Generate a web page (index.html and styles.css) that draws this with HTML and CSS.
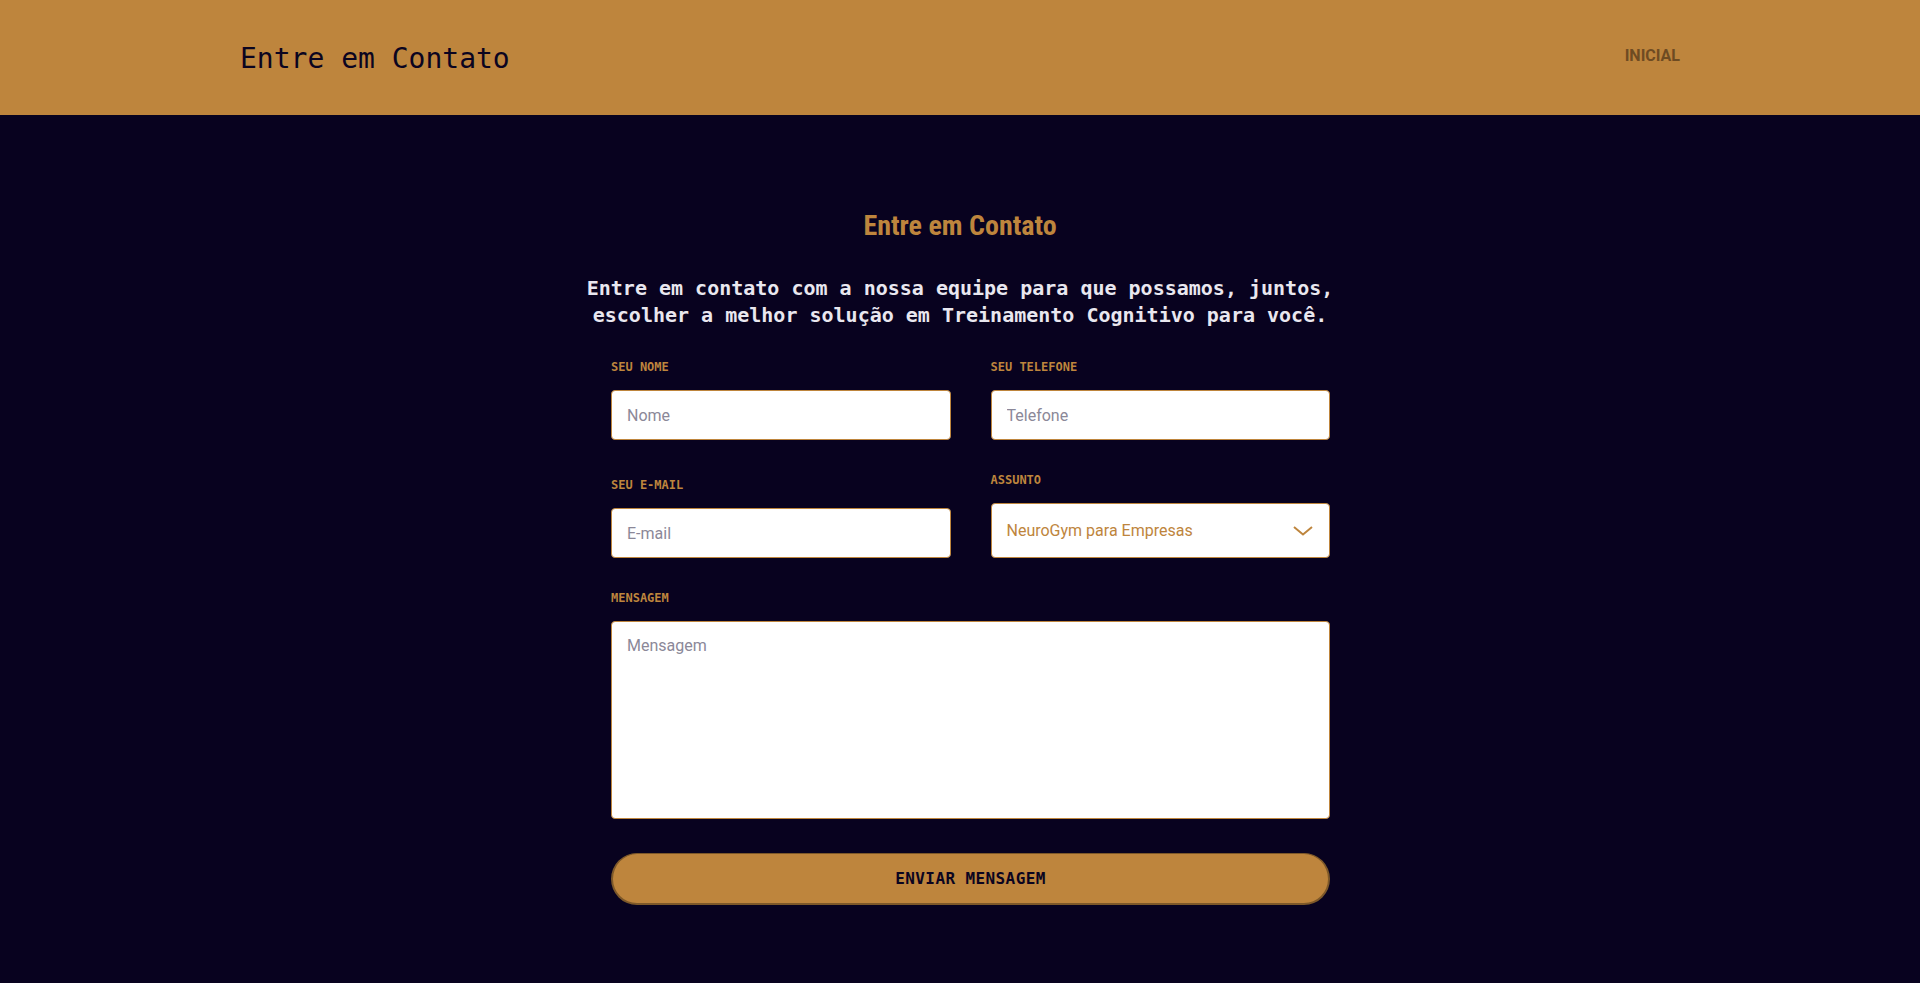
FILE: index.html
```html
<!DOCTYPE html>
<html lang="pt-BR">
<head>
<meta charset="utf-8">
<title>Entre em Contato</title>
<link rel="stylesheet" href="styles.css">
</head>
<body>
<header class="topbar">
  <div class="topbar-inner">
    <h1 class="brand">Entre em Contato</h1>
    <nav class="nav"><a class="nav-link" href="#">INICIAL</a></nav>
  </div>
</header>
<main class="main">
  <h2 class="title">Entre em Contato</h2>
  <p class="lead">Entre em contato com a nossa equipe para que possamos, juntos, escolher a melhor solução em Treinamento Cognitivo para você.</p>
  <form class="form">
    <div class="field">
      <label class="label">SEU NOME</label>
      <input class="control" type="text" placeholder="Nome">
    </div>
    <div class="field">
      <label class="label">SEU TELEFONE</label>
      <input class="control" type="text" placeholder="Telefone">
    </div>
    <div class="field">
      <label class="label">SEU E-MAIL</label>
      <input class="control" type="text" placeholder="E-mail">
    </div>
    <div class="field">
      <label class="label">ASSUNTO</label>
      <div class="select-wrap">
        <select class="control select">
          <option>NeuroGym para Empresas</option>
        </select>
        <svg class="chevron" width="20" height="10" viewBox="0 0 20 10"><path d="M1 1 L10 8.5 L19 1" fill="none" stroke="#be853d" stroke-width="2"/></svg>
      </div>
    </div>
    <div class="field full">
      <label class="label">MENSAGEM</label>
      <textarea class="control area" placeholder="Mensagem"></textarea>
    </div>
    <div class="field full">
      <button class="submit" type="button">ENVIAR MENSAGEM</button>
    </div>
  </form>
</main>
</body>
</html>
```
FILE: styles.css
```css
* { box-sizing: border-box; }
html, body { margin: 0; padding: 0; }
body {
  background: #08021f;
  font-family: Roboto, "Noto Sans", sans-serif;
  min-height: 983px;
}
.topbar {
  background: #be853d;
  height: 115px;
}
.topbar-inner {
  width: 1440px;
  height: 100%;
  margin: 0 auto;
  display: flex;
  align-items: center;
  justify-content: space-between;
}
.brand {
  margin: 0;
  font-family: "DejaVu Sans Mono", "Liberation Mono", monospace;
  font-weight: 400;
  font-size: 28px;
  color: #0b0420;
  padding-top: 2px;
}
.nav-link {
  font-family: Roboto, sans-serif;
  font-weight: 700;
  font-size: 16px;
  color: #6e4b22;
  text-decoration: none;
  display: block;
  margin-top: -4px;
}
.main {
  padding-top: 95px;
  padding-bottom: 78px;
}
.title {
  margin: 0;
  text-align: center;
  font-family: "Roboto Condensed", Roboto, sans-serif;
  font-stretch: condensed;
  font-weight: 700;
  font-size: 28px;
  line-height: 31px;
  color: #be853d;
}
.lead {
  width: 760px;
  margin: 34px auto 0;
  text-align: center;
  font-family: "DejaVu Sans Mono", "Liberation Mono", monospace;
  font-weight: 700;
  font-size: 20px;
  line-height: 27px;
  color: #e9e7ef;
}
.form {
  width: 719px;
  margin: 30px 0 0 calc(50% - 349px);
  display: grid;
  grid-template-columns: 1fr 1fr;
  column-gap: 40px;
  row-gap: 32px;
  align-items: end;
}
.field { display: flex; flex-direction: column; }
.full { grid-column: 1 / 3; }
.label {
  font-family: "DejaVu Sans Mono", "Liberation Mono", monospace;
  font-weight: 700;
  font-size: 12px;
  line-height: 16px;
  color: #be853d;
  margin-bottom: 15px;
}
.control {
  display: block;
  width: 100%;
  height: 50px;
  background: #fff;
  border: 1px solid #be853d;
  border-radius: 4px;
  padding: 0 15px;
  font-family: Roboto, sans-serif;
  font-size: 16px;
  color: #333;
  outline: none;
}
.control::placeholder { color: #8b8898; }
.select-wrap { position: relative; }
.select {
  height: 55px;
  appearance: none;
  -webkit-appearance: none;
  color: #be853d;
}
.chevron {
  position: absolute;
  right: 17px;
  top: 23px;
  pointer-events: none;
}
.area {
  height: 198px;
  padding: 14px 15px;
  resize: none;
}
.submit {
  margin-top: 2px;
  height: 52px;
  width: 100%;
  background: #be853d;
  border: 2px solid #7d5829;
  border-top-width: 1px;
  border-radius: 26px;
  font-family: "DejaVu Sans Mono", "Liberation Mono", monospace;
  font-weight: 700;
  font-size: 16px;
  letter-spacing: 0.4px;
  color: #0b0420;
  cursor: pointer;
}
```
